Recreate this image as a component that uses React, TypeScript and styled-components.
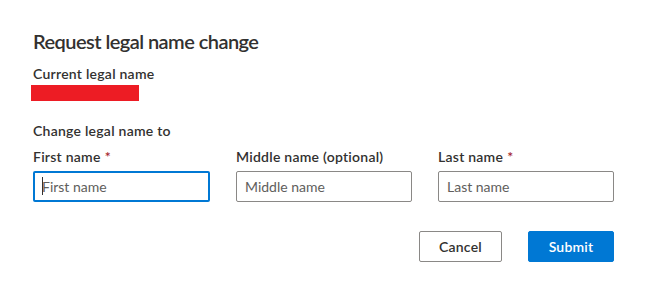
import { createGlobalStyle } from 'styled-components';
import styled from 'styled-components';

const GlobalStyle = createGlobalStyle`
  html, body {
    margin: 0;
    padding: 0;
    background: #ffffff;
  }
  body {
    font-family: "Segoe UI", Lato, "Liberation Sans", Arial, sans-serif;
    color: #323130;
    -webkit-font-smoothing: antialiased;
  }
`;

const Dialog = styled.div`
  width: 653px;
  height: 281px;
  box-sizing: border-box;
  padding: 27px 39px 0 33px;
  display: flex;
  flex-direction: column;
`;

const Title = styled.h2`
  margin: 0;
  font-size: 20px;
  line-height: 28px;
  font-weight: 600;
  letter-spacing: -0.55px;
`;

const SectionLabel = styled.div<{ $top: number }>`
  margin-top: ${(p) => p.$top}px;
  font-size: 14px;
  line-height: 20px;
  font-weight: 600;
  letter-spacing: 0.25px;
`;

const Redacted = styled.div`
  width: 108px;
  height: 16px;
  margin: 1px 0 0 -2px;
  background: #ed1c24;
`;

const FieldRow = styled.div`
  margin-top: 6px;
  display: grid;
  grid-template-columns: 177px 176px 176px;
  column-gap: 26px;
`;

const Field = styled.div`
  display: flex;
  flex-direction: column;
  gap: 4px;
`;

const FieldLabel = styled.label`
  font-size: 14px;
  line-height: 20px;
  font-weight: 600;
  letter-spacing: 0.25px;
`;

const Required = styled.span`
  color: #a4262c;
  margin-left: 4px;
`;

const InputWrap = styled.div`
  position: relative;
`;

const Input = styled.input<{ $focused?: boolean }>`
  box-sizing: border-box;
  width: 100%;
  height: 31px;
  margin: 0;
  padding: 0 8px;
  border: ${(p) => (p.$focused ? '2px solid #0078d4' : '1px solid #8a8886')};
  padding-left: ${(p) => (p.$focused ? '7px' : '8px')};
  border-radius: 2px;
  background: #ffffff;
  font-family: inherit;
  font-size: 14px;
  color: #323130;
  outline: none;

  &::placeholder {
    color: #605e5c;
    opacity: 1;
  }
`;

const Caret = styled.span`
  position: absolute;
  left: 9px;
  top: 6px;
  width: 1px;
  height: 18px;
  background: #323130;
`;

const Actions = styled.div`
  margin-top: 29px;
  display: flex;
  justify-content: flex-end;
  gap: 26px;
`;

const Button = styled.button<{ $primary?: boolean }>`
  box-sizing: border-box;
  height: 31px;
  width: ${(p) => (p.$primary ? '86px' : '83px')};
  padding: 0;
  border-radius: 2px;
  border: 1px solid ${(p) => (p.$primary ? '#0078d4' : '#8a8886')};
  background: ${(p) => (p.$primary ? '#0078d4' : '#ffffff')};
  color: ${(p) => (p.$primary ? '#ffffff' : '#323130')};
  font-family: inherit;
  font-size: 14px;
  font-weight: 600;
  letter-spacing: 0.2px;
  cursor: pointer;
`;

const fields = [
  { label: 'First name', placeholder: 'First name', required: true, focused: true },
  { label: 'Middle name (optional)', placeholder: 'Middle name', required: false, focused: false },
  { label: 'Last name', placeholder: 'Last name', required: true, focused: false },
];

const App = () => {
  return (
    <>
      <GlobalStyle />
      <Dialog>
        <Title>Request legal name change</Title>
        <SectionLabel $top={9}>Current legal name</SectionLabel>
        <Redacted />
        <SectionLabel $top={20}>Change legal name to</SectionLabel>
        <FieldRow>
          {fields.map((f) => (
            <Field key={f.label}>
              <FieldLabel>
                {f.label}
                {f.required && <Required>*</Required>}
              </FieldLabel>
              <InputWrap>
                <Input $focused={f.focused} placeholder={f.placeholder} />
                {f.focused && <Caret />}
              </InputWrap>
            </Field>
          ))}
        </FieldRow>
        <Actions>
          <Button>Cancel</Button>
          <Button $primary>Submit</Button>
        </Actions>
      </Dialog>
    </>
  );
};

export default App;
